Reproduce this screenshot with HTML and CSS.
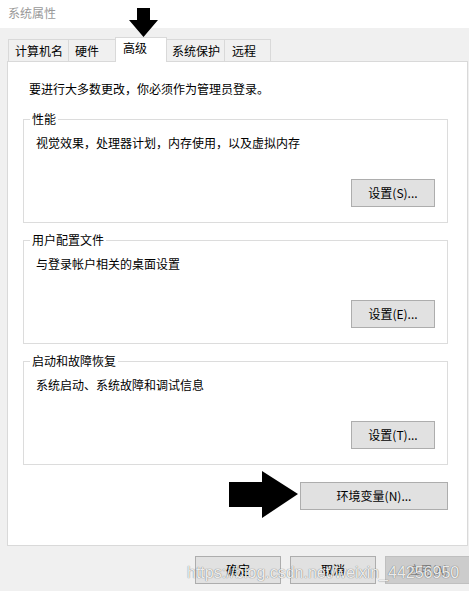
FILE: index.html
```html
<!DOCTYPE html>
<html lang="zh-CN">
<head>
<meta charset="utf-8">
<title>系统属性</title>
<link rel="stylesheet" href="styles.css">
</head>
<body>
<div class="titlebar">系统属性</div>
<div class="tabs">
  <div class="tab tab-1">计算机名</div>
  <div class="tab tab-2">硬件</div>
  <div class="tab tab-sel">高级</div>
  <div class="tab tab-4">系统保护</div>
  <div class="tab tab-5">远程</div>
</div>
<div class="panel">
  <div class="intro">要进行大多数更改，你必须作为管理员登录。</div>
  <div class="group">
    <div class="legend">性能</div>
    <div class="desc">视觉效果，处理器计划，内存使用，以及虚拟内存</div>
    <button class="btn btn-set">设置(S)...</button>
  </div>
  <div class="group">
    <div class="legend">用户配置文件</div>
    <div class="desc">与登录帐户相关的桌面设置</div>
    <button class="btn btn-set">设置(E)...</button>
  </div>
  <div class="group">
    <div class="legend">启动和故障恢复</div>
    <div class="desc">系统启动、系统故障和调试信息</div>
    <button class="btn btn-set">设置(T)...</button>
  </div>
  <button class="btn btn-env">环境变量(N)...</button>
</div>
<div class="footer">
  <button class="btn btn-foot">确定</button>
  <button class="btn btn-foot">取消</button>
  <button class="btn btn-foot btn-disabled">应用(A)</button>
</div>
<svg class="arrow-down" width="469" height="591" viewBox="0 0 469 591" aria-hidden="true">
  <polygon points="137,8 150,8 150,20 158,20 143.5,37 129,20 137,20" fill="#000"/>
</svg>
<svg class="arrow-right" width="469" height="591" viewBox="0 0 469 591" aria-hidden="true">
  <polygon points="229,482 262,482 262,471 298,494 262,518 262,507 229,507" fill="#000"/>
</svg>
<div class="watermark">https://blog.csdn.net/weixin_44256950</div>
</body>
</html>
```
FILE: styles.css
```css
* { box-sizing: border-box; }
html, body {
  margin: 0;
  padding: 0;
}
body {
  width: 469px;
  height: 591px;
  overflow: hidden;
  position: relative;
  background: #f0f0f0;
  font-family: "Noto Sans CJK SC", "Noto Sans", sans-serif;
  font-size: 12px;
  color: #000;
}
.titlebar {
  height: 28px;
  line-height: 26px;
  background: #fff;
  color: #999;
  padding-left: 8px;
}
.tabs {
  height: 33px;
  display: flex;
  align-items: flex-end;
  padding-left: 8px;
  position: relative;
  z-index: 1;
}
.tab {
  height: 22px;
  line-height: 21px;
  border: 1px solid #d9d9d9;
  border-bottom: none;
  background: #f0f0f0;
  white-space: nowrap;
}
.tab-1 { width: 61px; padding-left: 6px; }
.tab-2 { width: 50px; padding-left: 6px; margin-left: -1px; }
.tab-sel {
  width: 52px;
  height: 25px;
  line-height: 20px;
  padding-left: 7px;
  margin-left: -3px;
  margin-bottom: -1px;
  background: #fff;
  position: relative;
  z-index: 2;
}
.tab-4 { width: 59px; padding-left: 5px; margin-left: -1px; }
.tab-5 { width: 47px; padding-left: 7px; margin-left: -1px; }
.panel {
  margin-left: 7px;
  width: 461px;
  height: 485px;
  border: 1px solid #d9d9d9;
  background: #fff;
  padding: 19px 19px 0 15px;
  display: flex;
  flex-direction: column;
}
.intro {
  line-height: 16px;
  padding-left: 6px;
  margin-bottom: 22px;
}
.group {
  height: 104px;
  border: 1px solid #dcdcdc;
  padding: 0 12px 0 12px;
  margin-bottom: 17px;
  display: flex;
  flex-direction: column;
}
.legend {
  align-self: flex-start;
  line-height: 16px;
  height: 16px;
  margin: -9px 0 0 -6px;
  padding: 0 2px;
  background: #fff;
}
.desc {
  line-height: 16px;
  margin-top: 8px;
}
.btn {
  font-family: "Noto Sans CJK SC", "Noto Sans", sans-serif;
  font-size: 12px;
  color: #000;
  background: #e1e1e1;
  border: 1px solid #adadad;
  border-radius: 0;
  padding: 0;
  height: 28px;
  line-height: 24px;
  text-align: center;
}
.btn-set {
  width: 84px;
  margin-top: 28px;
  align-self: flex-end;
}
.btn-env {
  width: 148px;
  align-self: flex-end;
  margin-top: 0;
}
.footer {
  display: flex;
  gap: 9px;
  padding: 10px 0 0 195px;
}
.btn-foot {
  width: 86px;
  flex: none;
}
.btn-disabled {
  background: #cccccc;
  border-color: #bfbfbf;
  color: #838383;
}
.arrow-down,
.arrow-right {
  position: absolute;
  left: 0;
  top: 0;
  z-index: 5;
  pointer-events: none;
}
.watermark {
  position: absolute;
  left: 187px;
  top: 564px;
  z-index: 6;
  font-family: "Liberation Sans", Arial, sans-serif;
  font-size: 16px;
  line-height: 18px;
  white-space: nowrap;
  color: rgba(255, 255, 255, 0.9);
  text-shadow: 0 0 1px rgba(0, 0, 0, 0.45), 0 0 1px rgba(0, 0, 0, 0.25);
}
```
